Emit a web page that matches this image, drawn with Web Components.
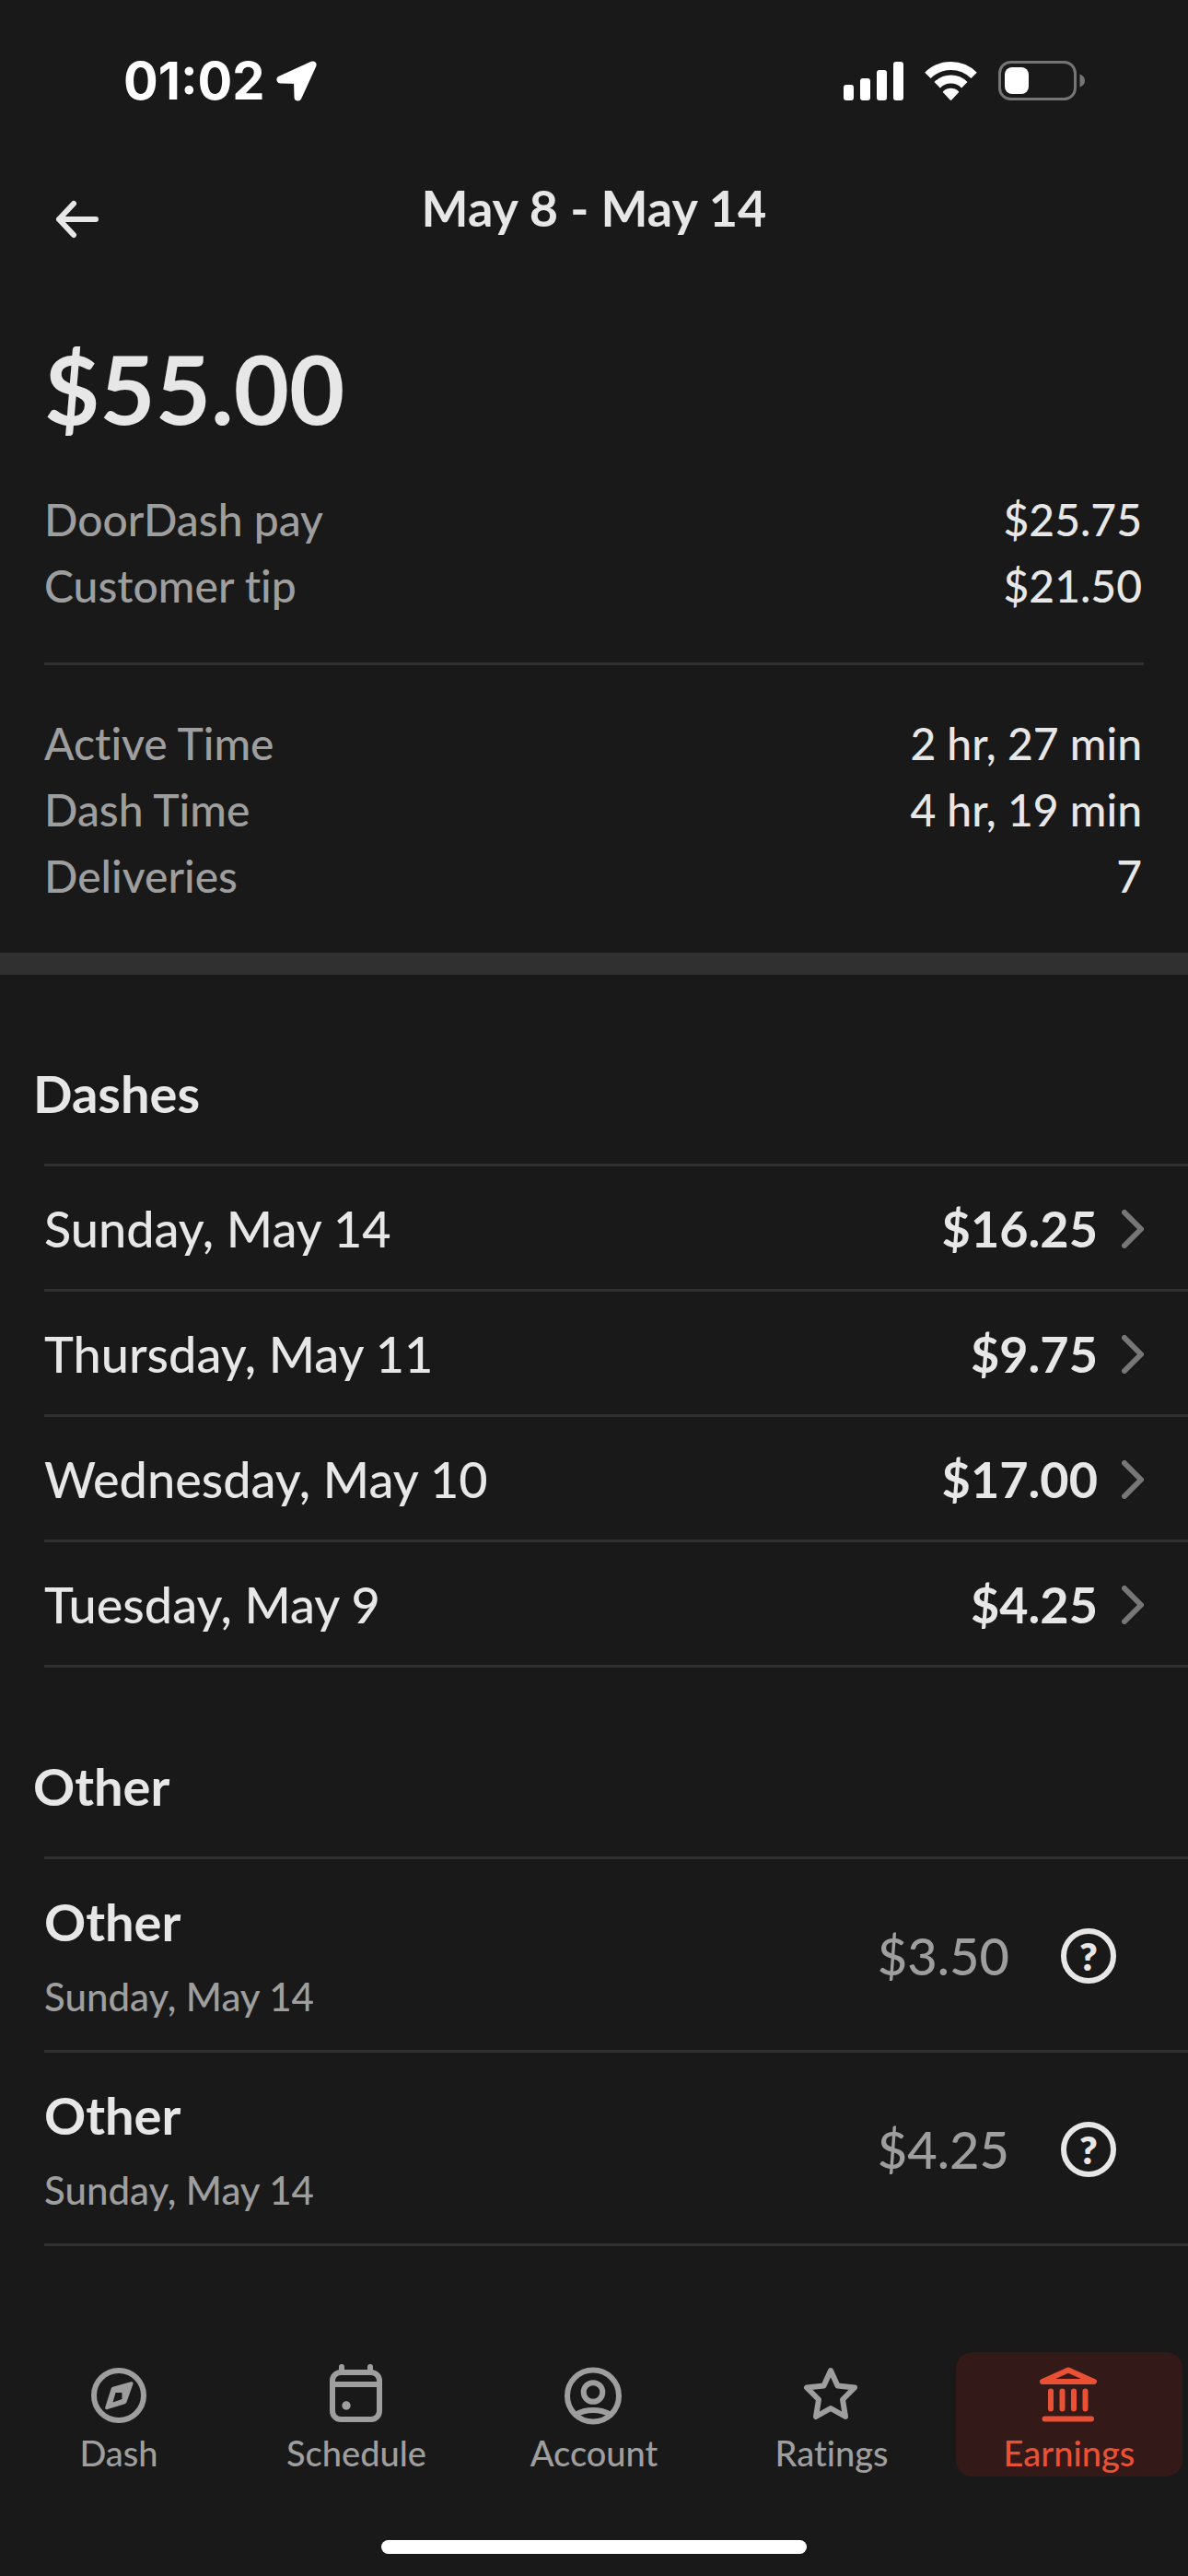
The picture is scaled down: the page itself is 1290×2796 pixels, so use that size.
<!DOCTYPE html>
<html lang="en">
<head>
<meta charset="utf-8">
<meta name="viewport" content="width=device-width, initial-scale=1">
<title>Earnings</title>
<style>
:root{
  --bg:#191919; --text:#e7e7e7; --muted:#9e9e9e; --line:#303030; --chevron:#777777;
  --accent:#e95034; --accent-bg:#331917;
  --body:48px; --title:54px; --heading:56px; --small:42px; --tab:38px;
}
body{margin:0;background:var(--bg);color:var(--text);font-family:Lato,"Open Sans",sans-serif;font-weight:500;font-variant-ligatures:none}
</style>
</head>
<body>
<earnings-screen></earnings-screen>
<script>
const define = (name, html) => {
  const template = document.createElement('template');
  template.innerHTML = html;
  customElements.define(name, class extends HTMLElement {
    constructor() {
      super();
      this.attachShadow({mode: 'open'}).append(template.content.cloneNode(true));
    }
  });
};

define('status-bar', `
<style>
:host{display:flex;justify-content:space-between;align-items:center;height:72px;padding:52px 112px 0 134px;color:#fff}
div{display:flex;align-items:center}
time{font:700 56px/72px Inter,sans-serif}
.left{gap:12px}.right{gap:23px}
svg{display:block}
</style>
<div class="left"><time>01:02</time>
<svg width="44" height="44" fill="#fff" stroke="#fff" stroke-width="8" stroke-linejoin="round" aria-hidden="true"><path d="M39.5 4.5 4.5 20.5 23 21l.5 18.500z"/></svg></div>
<div class="right">
<svg width="65" height="42" fill="#fff" aria-hidden="true"><rect y="25" width="11" height="17" rx="3"/><rect x="18" y="18" width="11" height="24" rx="3"/><rect x="36" y="9" width="11" height="33" rx="3"/><rect x="54" width="11" height="42" rx="3"/></svg>
<svg width="57" height="42" fill="none" stroke="#fff" stroke-width="9" aria-hidden="true"><path d="M3.400 14.900a35.500 35.500 0 0 1 50.200 0M13.700 25.200a21 21 0 0 1 29.600 0"/><path fill="#fff" stroke="none" d="M20 33.200q-.5-.7.300-1.300a12 12 0 0 1 16.400 0q.8.600.3 1.300L29.300 41.500q-.8.800-1.600 0z"/></svg>
<svg width="94" height="44" aria-hidden="true"><rect x="1.500" y="1.500" width="82" height="40" rx="12" fill="none" stroke="#757575" stroke-width="3"/><rect x="7" y="7" width="26" height="29" rx="8" fill="#fff"/><path d="M88.500 14.500q5.500 2 5.500 7t-5.500 7z" fill="#757575"/></svg>
</div>`);

define('page-header', `
<style>
:host{display:grid;grid-template-columns:48px 1fr 48px;align-items:end;padding:66px 60px 0}
h1{margin:0;font-size:var(--title);line-height:72px;font-weight:700;text-align:center}
button{all:unset;display:block;height:48px;cursor:pointer}
svg{display:block}
</style>
<button type="button" aria-label="Back"><svg width="48" height="48" fill="none" stroke="#e7e7e7" stroke-width="6" stroke-linecap="round" stroke-linejoin="round"><path d="M44 24H4M20 7 4 24l16 17"/></svg></button>
<h1><slot></slot></h1>`);

define('week-summary', `
<style>
:host{display:block;padding:99px 48px 47px;border-bottom:24px solid var(--line)}
.total{margin:0 0 47px;font-size:104px;line-height:120px;font-weight:700}
hr{margin:47px 0 49px;border:0;height:3px;background:var(--line)}
</style>
<p class="total"><slot name="total"></slot></p>
<slot name="pay"></slot>
<hr>
<slot name="time"></slot>`);

define('stat-row', `
<style>
:host{display:flex;justify-content:space-between;font-size:var(--body);line-height:72px;padding:0 2px 0 0}
.label{color:var(--muted)}
</style>
<span class="label"><slot></slot></span><span><slot name="value"></slot></span>`);

define('list-section', `
<style>
:host{display:block;padding-top:93px}
h2{margin:0 0 40px 36px;font-size:var(--heading);line-height:72px;font-weight:700}
.rows{margin-left:48px;border-top:3px solid var(--line)}
</style>
<h2><slot name="heading"></slot></h2>
<div class="rows"><slot></slot></div>`);

define('dash-row', `
<style>
:host{display:block;border-bottom:3px solid var(--line)}
a{box-sizing:border-box;display:flex;align-items:center;height:133px;padding:3px 48px 0 0;font-size:var(--title);line-height:72px;color:inherit;text-decoration:none}
.day{flex:1}
.amount{font-weight:700}
svg{display:block;margin-left:26px}
</style>
<a href="#"><span class="day"><slot></slot></span><span class="amount"><slot name="amount"></slot></span>
<svg width="24" height="42" fill="none" stroke="#777777" stroke-width="6" stroke-linecap="round" stroke-linejoin="round" aria-hidden="true"><path d="M3 3l18 18L3 39"/></svg></a>`);

define('other-row', `
<style>
:host{box-sizing:border-box;display:flex;align-items:center;height:210px;padding:3px 78px 0 0;border-bottom:3px solid var(--line)}
.text{flex:1;display:flex;flex-direction:column;gap:15px}
strong{font-size:var(--heading);line-height:72px;font-weight:700}
.date{font-size:var(--small);line-height:60px;color:var(--muted)}
.amount{font-size:var(--heading);line-height:72px;color:var(--muted)}
button{box-sizing:border-box;width:60px;height:60px;margin:0 0 0 56px;padding:0;border:6px solid var(--text);border-radius:50%;background:none;color:var(--text);font:800 42px/48px Lato,sans-serif;text-align:center;cursor:pointer}
</style>
<div class="text"><strong><slot></slot></strong><span class="date"><slot name="date"></slot></span></div>
<span class="amount"><slot name="amount"></slot></span>
<button type="button" title="Help">?</button>`);

define('tab-item', `
<style>
:host{flex:1;display:block;padding:0 6px;color:var(--muted)}
:host([selected]){color:var(--accent)}
a{display:flex;flex-direction:column;align-items:center;gap:5px;padding:11px 0 5px;border-radius:18px;color:inherit;text-decoration:none;font-size:var(--tab);line-height:42px}
:host([selected]) a{background:var(--accent-bg)}
</style>
<a href="#"><slot name="icon"></slot><slot></slot></a>`);

define('tab-bar', `
<style>
:host{display:block;padding-bottom:24px}
nav{display:flex}
.home{width:462px;height:15px;margin:69px auto 0;border-radius:8px;background:#fff}
tab-item svg{display:block;width:72px;height:72px;fill:none;stroke:currentColor;stroke-width:6;stroke-linecap:round;stroke-linejoin:round}
</style>
<nav>
<tab-item><svg slot="icon" viewBox="0 0 72 72"><circle cx="36" cy="36" r="27"/><path fill="currentColor" fill-rule="evenodd" stroke="none" d="M49 21.300 29.500 26.800Q28 27.300 27.600 28.800L21.200 49Q20.800 52 23.800 51L42.500 45.300Q44 44.800 44.500 43.200L51.500 23.500Q52 20.600 49 21.300zM32.500 33H39.500V40L29.500 43.500z"/></svg>Dash</tab-item>
<tab-item><svg slot="icon" viewBox="0 0 72 72"><rect x="10" y="11" width="51" height="51" rx="9"/><path d="M12 24H59M20 5v5M51 5v5"/><circle cx="25" cy="47" r="4.700" fill="currentColor" stroke="none"/></svg>Schedule</tab-item>
<tab-item><svg slot="icon" viewBox="0 0 72 72"><circle cx="35" cy="36.500" r="28"/><circle cx="35" cy="32.500" r="10.300"/><path d="M16 57Q24 52 35 52t19 5"/></svg>Account</tab-item>
<tab-item><svg slot="icon" viewBox="0 0 72 72"><path d="M35 9 42.500 25.500 61 27.500 48 40.500 51 59 35 50 19 59 22 40.500 9 27.500 27.500 25.500z"/></svg>Ratings</tab-item>
<tab-item selected><svg slot="icon" viewBox="0 0 72 72"><path d="M35 8.500 63 21H7zM16 31.500v19M28.500 31.500v19M41 31.500v19M53.500 31.500v19M9.500 61.500H60"/></svg>Earnings</tab-item>
</nav>
<div class="home"></div>`);

define('earnings-screen', `
<style>
:host{display:flex;flex-direction:column;min-height:100vh}
tab-bar{margin-top:auto}
</style>
<status-bar></status-bar>
<page-header>May 8 - May 14</page-header>
<main>
<week-summary>
<span slot="total">$55.00</span>
<stat-row slot="pay">DoorDash pay<span slot="value">$25.75</span></stat-row>
<stat-row slot="pay">Customer tip<span slot="value">$21.50</span></stat-row>
<stat-row slot="time">Active Time<span slot="value">2 hr, 27 min</span></stat-row>
<stat-row slot="time">Dash Time<span slot="value">4 hr, 19 min</span></stat-row>
<stat-row slot="time">Deliveries<span slot="value">7</span></stat-row>
</week-summary>
<list-section><span slot="heading">Dashes</span>
<dash-row>Sunday, May 14<span slot="amount">$16.25</span></dash-row>
<dash-row>Thursday, May 11<span slot="amount">$9.75</span></dash-row>
<dash-row>Wednesday, May 10<span slot="amount">$17.00</span></dash-row>
<dash-row>Tuesday, May 9<span slot="amount">$4.25</span></dash-row>
</list-section>
<list-section><span slot="heading">Other</span>
<other-row>Other<span slot="date">Sunday, May 14</span><span slot="amount">$3.50</span></other-row>
<other-row>Other<span slot="date">Sunday, May 14</span><span slot="amount">$4.25</span></other-row>
</list-section>
</main>
<tab-bar></tab-bar>`);
</script>
</body>
</html>
